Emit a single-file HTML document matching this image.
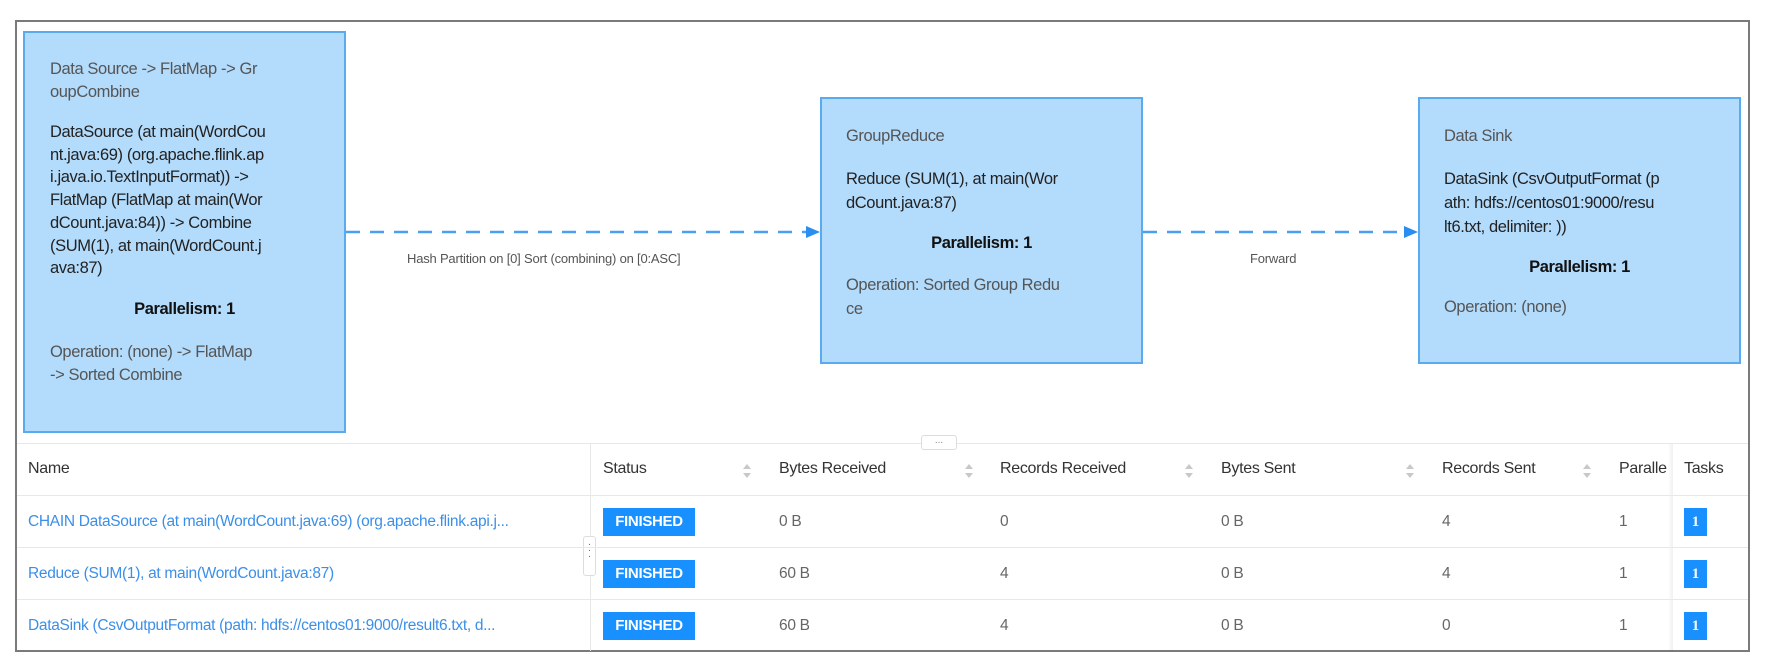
<!DOCTYPE html>
<html><head><meta charset="utf-8"><style>
*{margin:0;padding:0;box-sizing:border-box}
body{width:1773px;height:667px;background:#fff;position:relative;overflow:hidden;font-family:"Liberation Sans","DejaVu Sans",sans-serif}
.frame{position:absolute;left:15px;top:20px;width:1735px;height:632px;border:2px solid #7a7a7a}
.box{position:absolute;background:#b3dbfc;border:2px solid #5aaaf0;font-size:16.5px;letter-spacing:-0.4px;color:#222;line-height:24px;white-space:nowrap}
.box .t{color:#555}
.box .p{font-weight:bold;color:#111;text-align:center}
.box .o{color:#555}
.a{position:absolute}
.lbl{position:absolute;font-size:13px;color:#555;letter-spacing:-0.2px;white-space:nowrap}
.th{position:absolute;top:460px;font-size:16px;color:#333;letter-spacing:-0.3px;white-space:nowrap}
.td{position:absolute;font-size:15.5px;color:#666;letter-spacing:-0.3px;white-space:nowrap}
.lk{color:#3b8fe8}
.hl{position:absolute;left:17px;width:1731px;height:1px;background:#e8e8e8}
.badge{position:absolute;left:603px;width:92px;height:28px;background:#1890ff;color:#fff;font-weight:bold;font-size:15px;text-align:center;line-height:28px;letter-spacing:-0.3px}
.tb{position:absolute;left:1684px;width:23px;height:28px;background:#1890ff;color:#fff;font-weight:bold;font-size:15px;text-align:center;line-height:28px;font-family:"Liberation Serif",serif}
.sort{position:absolute;top:461px;width:10px;height:20px}
</style></head><body>
<div class="frame"></div>

<div class="box" style="left:23px;top:31px;width:323px;height:402px;padding:25px 0 0 25px;line-height:23px">
<div class="t" style="line-height:23px">Data Source -&gt; FlatMap -&gt; Gr<br>oupCombine</div>
<div style="margin-top:17px;line-height:22.7px">DataSource (at main(WordCou<br>nt.java:69) (org.apache.flink.ap<br>i.java.io.TextInputFormat)) -&gt;<br>FlatMap (FlatMap at main(Wor<br>dCount.java:84)) -&gt; Combine<br>(SUM(1), at main(WordCount.j<br>ava:87)</div>
<div class="p" style="margin-top:18px;margin-left:-25px">Parallelism: 1</div>
<div class="o" style="margin-top:20px">Operation: (none) -&gt; FlatMap<br>-&gt; Sorted Combine</div>
</div>

<div class="box" style="left:820px;top:97px;width:323px;height:267px;padding:25px 0 0 24px">
<div class="t">GroupReduce</div>
<div style="margin-top:19px">Reduce (SUM(1), at main(Wor<br>dCount.java:87)</div>
<div class="p" style="margin-top:16px;margin-left:-24px">Parallelism: 1</div>
<div class="o" style="margin-top:18px">Operation: Sorted Group Redu<br>ce</div>
</div>

<div class="box" style="left:1418px;top:97px;width:323px;height:267px;padding:25px 0 0 24px">
<div class="t">Data Sink</div>
<div style="margin-top:19px">DataSink (CsvOutputFormat (p<br>ath: hdfs://centos01:9000/resu<br>lt6.txt, delimiter: ))</div>
<div class="p" style="margin-top:16px;margin-left:-24px">Parallelism: 1</div>
<div class="o" style="margin-top:16px">Operation: (none)</div>
</div>

<svg class="a" style="left:0;top:0" width="1773" height="667">
<line x1="346" y1="232" x2="808" y2="232" stroke="#4a9ff0" stroke-width="2.5" stroke-dasharray="14,10"/>
<polygon points="806,226 820,232 806,238" fill="#2a8df0"/>
<line x1="1143" y1="232" x2="1406" y2="232" stroke="#4a9ff0" stroke-width="2.5" stroke-dasharray="14,10"/>
<polygon points="1404,226 1418,232 1404,238" fill="#2a8df0"/>
</svg>
<div class="lbl" style="left:407px;top:251px">Hash Partition on [0] Sort (combining) on [0:ASC]</div>
<div class="lbl" style="left:1250px;top:251px">Forward</div>

<div class="hl" style="top:443px"></div>
<div class="a" style="left:921px;top:435px;width:36px;height:15px;border:1px solid #ddd;border-radius:3px;background:#fff;font-size:10px;color:#888;text-align:center;line-height:9px">...</div>
<div class="a" style="left:590px;top:444px;width:1px;height:207px;background:#e8e8e8"></div>
<div class="a" style="left:583px;top:536px;width:13px;height:40px;border:1px solid #ddd;border-radius:3px;background:#fff;font-size:10px;color:#666;text-align:center;line-height:6px;padding-top:5px">·<br>·<br>·</div>
<div class="a" style="left:1668px;top:444px;width:5px;height:207px;background:linear-gradient(to right,rgba(0,0,0,0),rgba(0,0,0,0.06))"></div>

<div class="hl" style="top:495px"></div>
<div class="hl" style="top:547px"></div>
<div class="hl" style="top:599px"></div>

<div class="th" style="left:28px">Name</div>
<div class="th" style="left:603px">Status</div>
<div class="th" style="left:779px">Bytes Received</div>
<div class="th" style="left:1000px">Records Received</div>
<div class="th" style="left:1221px">Bytes Sent</div>
<div class="th" style="left:1442px">Records Sent</div>
<div class="th" style="left:1619px">Paralle</div>
<div class="th" style="left:1684px;background:#fff;padding-right:10px">Tasks</div>

<svg class="sort" style="left:742px" viewBox="0 0 10 20"><polygon points="5,3 9,8 1,8" fill="#c8c8c8"/><polygon points="1,12 9,12 5,17" fill="#c8c8c8"/></svg>
<svg class="sort" style="left:964px" viewBox="0 0 10 20"><polygon points="5,3 9,8 1,8" fill="#c8c8c8"/><polygon points="1,12 9,12 5,17" fill="#c8c8c8"/></svg>
<svg class="sort" style="left:1184px" viewBox="0 0 10 20"><polygon points="5,3 9,8 1,8" fill="#c8c8c8"/><polygon points="1,12 9,12 5,17" fill="#c8c8c8"/></svg>
<svg class="sort" style="left:1405px" viewBox="0 0 10 20"><polygon points="5,3 9,8 1,8" fill="#c8c8c8"/><polygon points="1,12 9,12 5,17" fill="#c8c8c8"/></svg>
<svg class="sort" style="left:1582px" viewBox="0 0 10 20"><polygon points="5,3 9,8 1,8" fill="#c8c8c8"/><polygon points="1,12 9,12 5,17" fill="#c8c8c8"/></svg>

<div class="td lk" style="left:28px;top:513px">CHAIN DataSource (at main(WordCount.java:69) (org.apache.flink.api.j...</div>
<div class="td lk" style="left:28px;top:565px">Reduce (SUM(1), at main(WordCount.java:87)</div>
<div class="td lk" style="left:28px;top:617px">DataSink (CsvOutputFormat (path: hdfs://centos01:9000/result6.txt, d...</div>

<div class="badge" style="top:508px">FINISHED</div>
<div class="badge" style="top:560px">FINISHED</div>
<div class="badge" style="top:612px">FINISHED</div>

<div class="td" style="left:779px;top:513px">0 B</div>
<div class="td" style="left:779px;top:565px">60 B</div>
<div class="td" style="left:779px;top:617px">60 B</div>
<div class="td" style="left:1000px;top:513px">0</div>
<div class="td" style="left:1000px;top:565px">4</div>
<div class="td" style="left:1000px;top:617px">4</div>
<div class="td" style="left:1221px;top:513px">0 B</div>
<div class="td" style="left:1221px;top:565px">0 B</div>
<div class="td" style="left:1221px;top:617px">0 B</div>
<div class="td" style="left:1442px;top:513px">4</div>
<div class="td" style="left:1442px;top:565px">4</div>
<div class="td" style="left:1442px;top:617px">0</div>
<div class="td" style="left:1619px;top:513px">1</div>
<div class="td" style="left:1619px;top:565px">1</div>
<div class="td" style="left:1619px;top:617px">1</div>

<div class="tb" style="top:508px">1</div>
<div class="tb" style="top:560px">1</div>
<div class="tb" style="top:612px">1</div>
</body></html>
